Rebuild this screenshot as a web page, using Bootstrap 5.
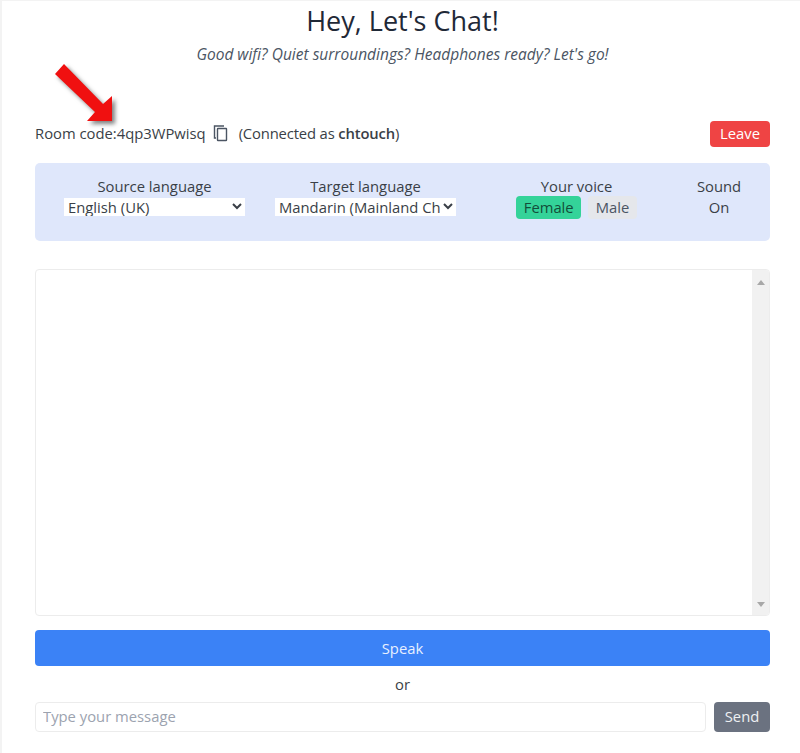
<!DOCTYPE html>
<html lang="en">
<head>
<meta charset="utf-8">
<title>Hey, Let's Chat!</title>
<link href="https://cdn.jsdelivr.net/npm/bootstrap@5.3.0/dist/css/bootstrap.min.css" rel="stylesheet">
<style>
html,body{height:100%;overflow:hidden;}
body{font-family:"Open Sans","Noto Sans",sans-serif;font-size:14.8px;color:#3a3f47;background:#fff;}
.chat-page{height:753px;border-left:2px solid #f3f3f3;border-top:1px solid #f3f3f3;padding:0 30px 0 33px;position:relative;}
.chat-title{font-size:27px;line-height:40px;font-weight:400;color:#1f2937;margin:0;}
.chat-sub{font-size:15.5px;line-height:22px;margin:2px 0 0;font-style:italic;color:#4b5563;}
.room-row{height:28px;margin-top:55px;}
.room-info{padding-bottom:2px;}
.conn-text{letter-spacing:-.15px;}
.copy-ico{margin:0 10px 0 7px;flex:none;}
.leave-btn{background:#ef4444;color:#fff;border:0;font-size:14.8px;height:26px;width:60px;padding:0 0 2px;border-radius:4px;}
.lang-panel{display:grid;grid-template-columns:211px 211px 211px 1fr;background:#dfe7fb;border-radius:5px;height:78px;margin-top:15px;padding:13px 14px 0;}
.lang-col{text-align:center;line-height:21px;}
.sel-clip{width:181px;height:18px;overflow:hidden;margin:1px auto 0;}
.lang-sel{display:block;width:181px;height:20px;border:0;background:#fff;color:#3a3f47;font:inherit;padding:0;margin-top:-2px;border-radius:0;}
.voice-on,.voice-off{display:inline-block;padding:0 7.5px;height:23px;line-height:23px;border-radius:4px;}
.voice-on{background:#34d399;color:#134e3a;}
.voice-off{background:#e5e7eb;color:#4b5563;}
.voice-set{gap:7px;margin-top:-1px;}
.chat-box{height:347px;margin-top:28px;border:1px solid #ececec;border-radius:4px;overflow:hidden;}
.scroll-rail{width:17px;background:#f1f1f1;padding:10px 0 8px;}
.scroll-up,.scroll-down{width:0;height:0;border-left:4px solid transparent;border-right:4px solid transparent;}
.scroll-up{border-bottom:5px solid #a8a8a8;}
.scroll-down{border-top:5px solid #a8a8a8;}
.speak-btn{background:#3b82f6;color:#e8f0ff;border:0;height:36px;margin-top:14px;border-radius:4px;font-size:14.8px;padding:0;}
.or-line{text-align:center;line-height:20px;margin-top:8px;}
.msg-row{margin-top:8px;gap:8px;}
.msg-input{height:30px;border:1px solid #ececec;border-radius:4px;font-size:14.8px;padding:0 7px 2px;color:#3a3f47;box-shadow:none;}
.msg-input::placeholder{color:#9ca3af;opacity:1;}
.send-btn{background:#6b7280;color:#eef0f3;border:0;height:30px;width:56px;flex:none;padding:0 0 2px;border-radius:4px;font-size:14.8px;}
.red-arrow{position:absolute;left:48px;top:59px;filter:drop-shadow(3px 3px 2px rgba(60,60,60,.65));}
</style>
</head>
<body>
<div class="chat-page">
  <h1 class="chat-title text-center">Hey, Let's Chat!</h1>
  <p class="chat-sub text-center">Good wifi? Quiet surroundings? Headphones ready? Let's go!</p>
  <div class="room-row d-flex align-items-center justify-content-between">
    <div class="room-info d-flex align-items-center">
      <span>Room code:4qp3WPwisq</span>
      <svg class="copy-ico" width="16" height="17" viewBox="0 0 16 17" fill="none" stroke="#4b5563" stroke-width="1.4"><path d="M3 13H1.5V1H11"/><rect x="4.5" y="3.5" width="9" height="12" rx=".5"/></svg>
      <span class="conn-text">(Connected as <b class="fw-semibold">chtouch</b>)</span>
    </div>
    <button class="btn leave-btn" type="button">Leave</button>
  </div>
  <div class="lang-panel">
    <div class="lang-col">
      <div>Source language</div>
      <div class="sel-clip"><select class="lang-sel"><option>English (UK)</option></select></div>
    </div>
    <div class="lang-col">
      <div>Target language</div>
      <div class="sel-clip"><select class="lang-sel"><option>Mandarin (Mainland China)</option></select></div>
    </div>
    <div class="lang-col">
      <div>Your voice</div>
      <div class="d-flex justify-content-center voice-set"><span class="voice-on">Female</span><span class="voice-off">Male</span></div>
    </div>
    <div class="lang-col">
      <div>Sound</div>
      <div>On</div>
    </div>
  </div>
  <div class="chat-box d-flex justify-content-end">
    <div class="scroll-rail d-flex flex-column justify-content-between align-items-center">
      <span class="scroll-up"></span><span class="scroll-down"></span>
    </div>
  </div>
  <button class="btn w-100 speak-btn d-block" type="button">Speak</button>
  <div class="or-line">or</div>
  <div class="d-flex msg-row">
    <input class="form-control msg-input" type="text" placeholder="Type your message">
    <button class="btn send-btn" type="button">Send</button>
  </div>
  <svg class="red-arrow" width="70" height="70" viewBox="50 60 70 70"><polygon points="64,64 103,104 112,96 112,121 87,121 95,112 55,74" fill="#f01010"/></svg>
</div>
<script src="https://cdn.jsdelivr.net/npm/bootstrap@5.3.0/dist/js/bootstrap.bundle.min.js"></script>
</body>
</html>
